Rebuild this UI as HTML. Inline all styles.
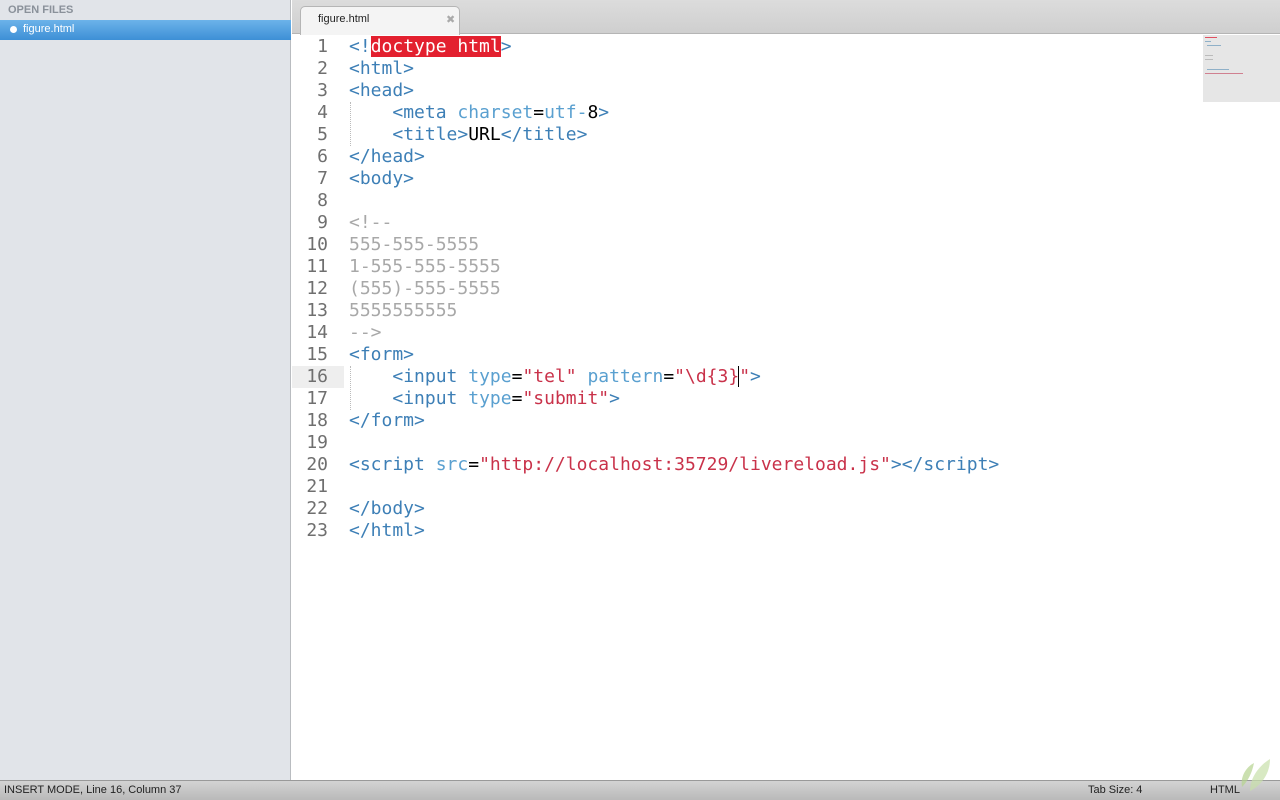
<!DOCTYPE html>
<html><head><style>
*{margin:0;padding:0;box-sizing:border-box}
body{width:1280px;height:800px;overflow:hidden;background:#fff;font-family:"Liberation Sans",sans-serif;position:relative}
#side{position:absolute;left:0;top:0;width:291px;height:780px;background:#e1e4e9;border-right:1px solid #b9bcc0}
#side .h{position:absolute;left:8px;top:4px;font-size:11px;font-weight:bold;color:#8a919a}
#side .sel{position:absolute;left:0;top:20px;width:291px;height:20px;background:linear-gradient(#6cb3ea,#3d8fd6);color:#fff;font-size:11px;line-height:18px;padding-left:23px}
#side .sel:before{content:"";position:absolute;left:10px;top:6px;width:7px;height:7px;border-radius:50%;background:#fff}
#tabbar{position:absolute;left:292px;top:0;width:988px;height:34px;background:linear-gradient(#dcdcdc,#cfcfcf);border-bottom:1px solid #b5b5b5}
#tab{position:absolute;left:8px;top:6px;width:160px;height:29px;background:#f4f4f4;border:1px solid #b5b5b5;border-bottom:none;border-radius:5px 5px 0 0;font-size:11px;color:#222;padding:6px 0 0 17px}
#tab span{position:absolute;left:145px;top:6px;color:#aaa;font-size:11px}
#code{position:absolute;left:292px;top:36px;font-family:"DejaVu Sans Mono",monospace;font-size:18px;line-height:22px}
.l{height:22px;white-space:pre;position:relative}
.n{display:inline-block;width:36px;text-align:right;color:#6f6f6f;margin-right:21px}
.cur{background:#eee;position:absolute;left:0;top:0;width:52px;height:22px;z-index:-1}
.t{color:#3d7fb6}.a{color:#5aa0d0}.s{color:#c9324a}.c{color:#a8a8a8}.k{color:#000}
.hl{background:#e3202f;color:#fff}
#mini{position:absolute;left:1203px;top:35px;width:77px;height:67px;background:#e6e6e6}
#mini i{position:absolute;height:1px;background:#8fb0c8}
#status{position:absolute;left:0;top:780px;width:1280px;height:20px;background:linear-gradient(#d3d3d3,#b9b9b9);border-top:1px solid #999;font-size:11px;color:#222;line-height:19px}
.guide{position:absolute;left:350px;border-left:1px dotted #bbb}
</style></head><body>
<div id="side"><div class="h">OPEN FILES</div><div class="sel">figure.html</div></div>
<div id="tabbar"><div id="tab">figure.html<span>✖</span></div></div>
<div class="guide" style="top:102px;height:44px"></div>
<div class="guide" style="top:366px;height:44px"></div>
<div id="code">
<div class="l"><span class="n">1</span><span class="t">&lt;!</span><span class="hl">doctype html</span><span class="t">&gt;</span></div>
<div class="l"><span class="n">2</span><span class="t">&lt;html&gt;</span></div>
<div class="l"><span class="n">3</span><span class="t">&lt;head&gt;</span></div>
<div class="l"><span class="n">4</span>    <span class="t">&lt;meta</span> <span class="a">charset</span><span class="k">=</span><span class="a">utf-</span><span class="k">8</span><span class="t">&gt;</span></div>
<div class="l"><span class="n">5</span>    <span class="t">&lt;title&gt;</span><span class="k">URL</span><span class="t">&lt;/title&gt;</span></div>
<div class="l"><span class="n">6</span><span class="t">&lt;/head&gt;</span></div>
<div class="l"><span class="n">7</span><span class="t">&lt;body&gt;</span></div>
<div class="l"><span class="n">8</span></div>
<div class="l"><span class="n">9</span><span class="c">&lt;!--</span></div>
<div class="l"><span class="n">10</span><span class="c">555-555-5555</span></div>
<div class="l"><span class="n">11</span><span class="c">1-555-555-5555</span></div>
<div class="l"><span class="n">12</span><span class="c">(555)-555-5555</span></div>
<div class="l"><span class="n">13</span><span class="c">5555555555</span></div>
<div class="l"><span class="n">14</span><span class="c">--&gt;</span></div>
<div class="l"><span class="n">15</span><span class="t">&lt;form&gt;</span></div>
<div class="l"><span class="cur"></span><span class="n">16</span>    <span class="t">&lt;input</span> <span class="a">type</span><span class="k">=</span><span class="s">"tel"</span> <span class="a">pattern</span><span class="k">=</span><span class="s">"\d{3}</span><span style="border-left:1px solid #000;margin-left:-1px"></span><span class="s">"</span><span class="t">&gt;</span></div>
<div class="l"><span class="n">17</span>    <span class="t">&lt;input</span> <span class="a">type</span><span class="k">=</span><span class="s">"submit"</span><span class="t">&gt;</span></div>
<div class="l"><span class="n">18</span><span class="t">&lt;/form&gt;</span></div>
<div class="l"><span class="n">19</span></div>
<div class="l"><span class="n">20</span><span class="t">&lt;script</span> <span class="a">src</span><span class="k">=</span><span class="s">"http://localhost:35729/livereload.js"</span><span class="t">&gt;&lt;/script&gt;</span></div>
<div class="l"><span class="n">21</span></div>
<div class="l"><span class="n">22</span><span class="t">&lt;/body&gt;</span></div>
<div class="l"><span class="n">23</span><span class="t">&lt;/html&gt;</span></div>
</div>
<div id="mini"><i style="left:2px;top:2px;width:12px;background:#e05060"></i><i style="left:2px;top:6px;width:6px"></i><i style="left:4px;top:10px;width:14px"></i><i style="left:2px;top:20px;width:8px;background:#bbb"></i><i style="left:2px;top:24px;width:8px;background:#bbb"></i><i style="left:4px;top:34px;width:22px"></i><i style="left:2px;top:38px;width:38px;background:#d08090"></i></div>
<div id="status"><span style="position:absolute;left:4px">INSERT MODE, Line 16, Column 37</span><span style="position:absolute;left:1088px">Tab Size: 4</span><span style="position:absolute;left:1210px">HTML</span></div>
<svg style="position:absolute;left:1236px;top:755px" width="40" height="40"><path d="M6 32 C4 22 10 12 18 8 C16 18 12 26 6 32Z" fill="#b5d38f" opacity=".7"/><path d="M14 36 C14 22 24 10 34 4 C34 18 26 30 14 36Z" fill="#c8dfaa" opacity=".7"/></svg>
</body></html>
